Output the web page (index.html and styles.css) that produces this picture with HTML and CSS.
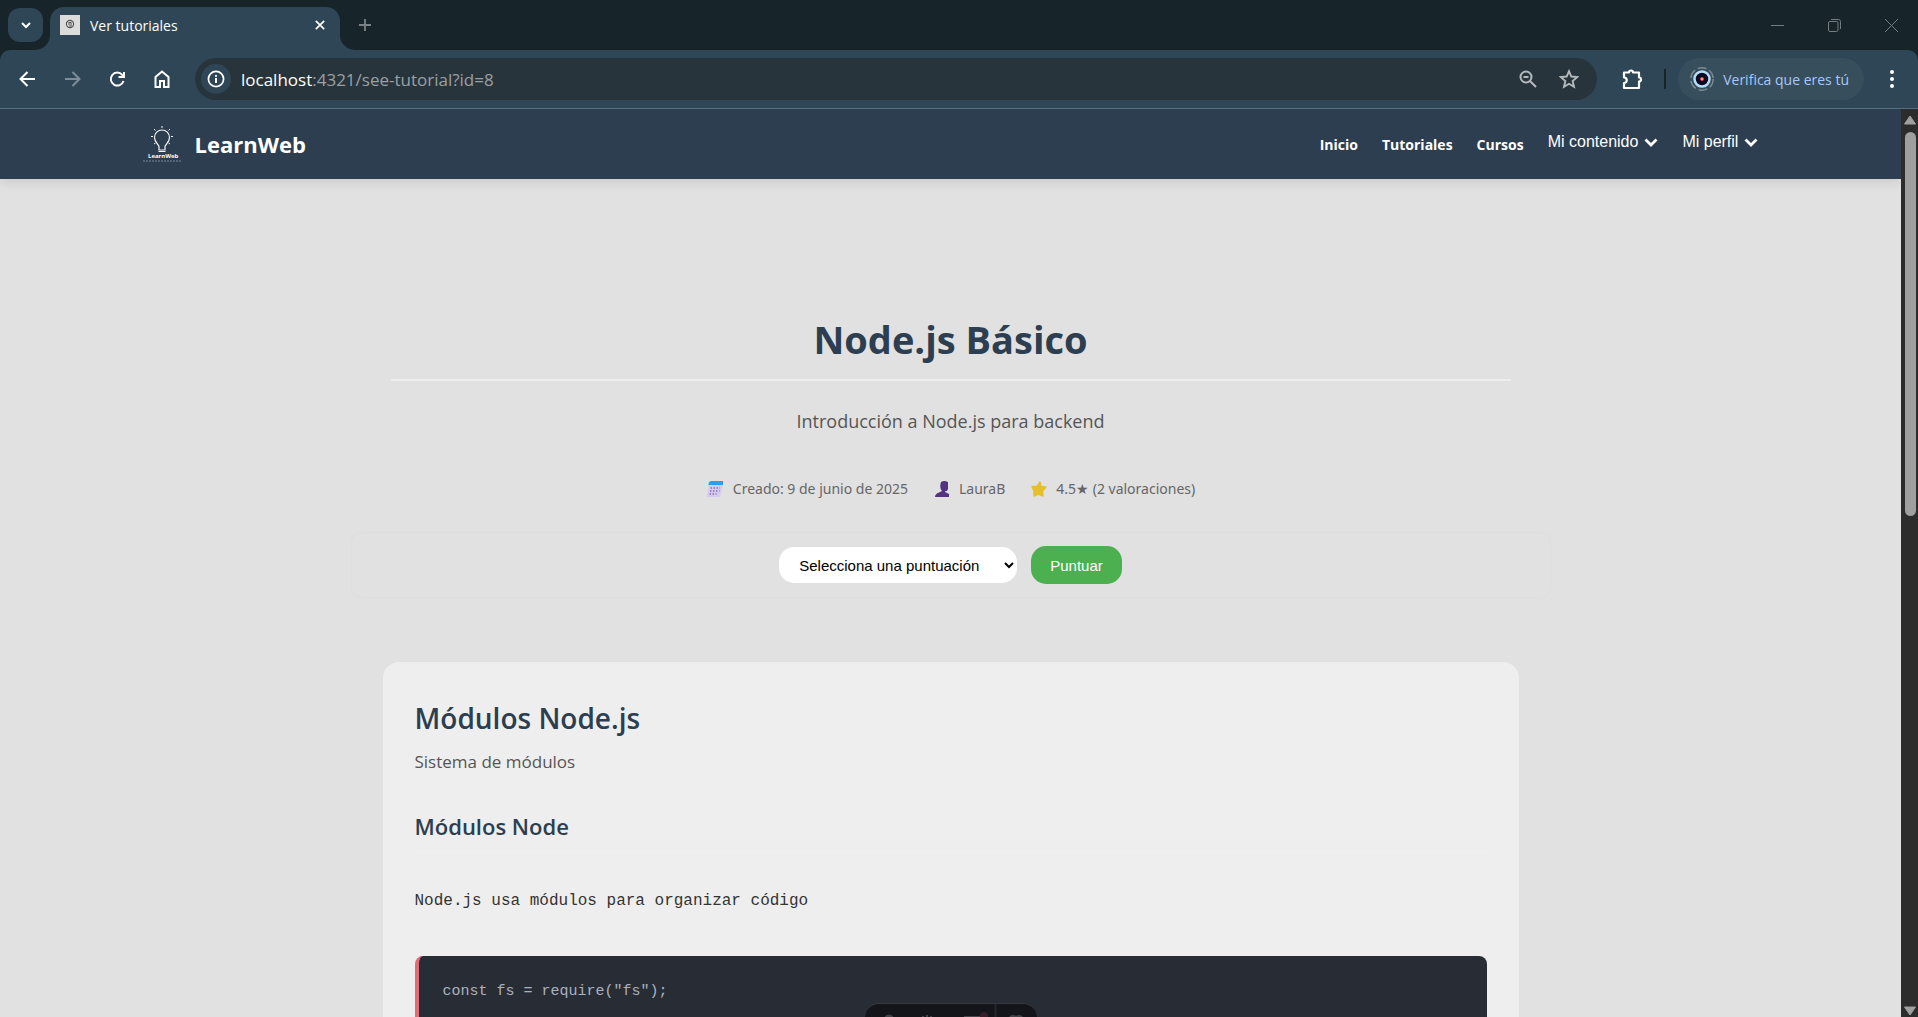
FILE: index.html
```html
<!DOCTYPE html>
<html lang="es">
<head>
<meta charset="utf-8">
<title>Ver tutoriales</title>
<link rel="stylesheet" href="styles.css">
</head>
<body>
<div class="window">
  <div class="tabstrip">
    <button class="tab-search" aria-label="Buscar pestañas"><svg width="12" height="12" viewBox="0 0 12 12"><path d="M2 4l4 4 4-4" class="line-white thick"/></svg></button>
    <div class="tab">
      <svg class="favicon" width="20" height="20" viewBox="0 0 20 20"><rect width="20" height="20" fill="#dcdcdc"/><circle cx="10" cy="9" r="3.6" fill="none" stroke="#555" stroke-width="1.2"/><path d="M8 9h4M8.500 7.500h3M9 11h3" stroke="#555"/></svg>
      <span class="tab-title">Ver tutoriales</span>
      <button class="plain" aria-label="Cerrar pestaña"><svg width="10" height="10" viewBox="0 0 10 10"><path d="M.8.800l8.400 8.400M9.200.800L.8 9.200" class="line-white" stroke-width="1.700"/></svg></button>
      <svg class="tab-foot foot-left" width="15" height="15" viewBox="0 0 15 15"><path d="M15 0v15H0A15 15 0 0 0 15 0z" fill="#2e4655"/></svg>
      <svg class="tab-foot foot-right" width="15" height="15" viewBox="0 0 15 15"><path d="M0 0v15h15A15 15 0 0 1 0 0z" fill="#2e4655"/></svg>
    </div>
    <button class="plain new-tab" aria-label="Nueva pestaña"><svg width="14" height="14" viewBox="0 0 14 14"><path d="M7 1v12M1 7h12" stroke="#7b8386" stroke-width="1.8"/></svg></button>
    <div class="window-buttons">
      <button class="plain" aria-label="Minimizar"><svg width="13" height="13" viewBox="0 0 13 13"><path d="M0 6.500h13" stroke="#747c80"/></svg></button>
      <button class="plain" aria-label="Restaurar"><svg width="13" height="13" viewBox="0 0 13 13" fill="none" stroke="#747c80"><rect x=".5" y="2.500" width="9.500" height="10" rx="1.500"/><path d="M3 .500H10.500q2 0 2 2V10"/></svg></button>
      <button class="plain" aria-label="Cerrar"><svg width="13" height="13" viewBox="0 0 13 13"><path d="M0 0l13 13M13 0L0 13" stroke="#747c80"/></svg></button>
    </div>
  </div>

  <div class="toolbar">
    <div class="nav-buttons">
      <button class="plain" aria-label="Atrás"><svg width="18" height="18" viewBox="0 0 18 18"><path d="M17 9H3M9.500 2L2.500 9l7 7" class="line-white thick"/></svg></button>
      <button class="plain" aria-label="Adelante"><svg width="18" height="18" viewBox="0 0 18 18"><path d="M2 9h14M9.500 2l7 7-7 7" fill="none" stroke="#7e8d97" stroke-width="2"/></svg></button>
      <button class="plain" aria-label="Recargar"><svg width="18" height="18" viewBox="0 0 18 18"><path d="M15.500 11A6.500 6.500 0 1 1 14.200 4.800L16 6.500M16 2v5h-5.500" class="line-white thick"/></svg></button>
      <button class="plain" aria-label="Inicio"><svg width="18" height="18" viewBox="0 0 18 18"><path d="M2.500 17V7l6.500-5.500L15.500 7v10h-4.500v-6H7v6z" class="line-white thick"/></svg></button>
    </div>
    <div class="address">
      <button class="site-info" aria-label="Información del sitio"><svg width="18" height="18" viewBox="0 0 18 18"><circle cx="9" cy="9" r="7.600" class="line-white" stroke-width="1.700"/><path d="M9 8v5M9 5v1.800" class="line-white thick"/></svg></button>
      <span class="url">localhost<span class="url-path">:4321/see-tutorial?id=8</span></span>
      <button class="plain" aria-label="Zoom"><svg width="18" height="18" viewBox="0 0 18 18" fill="none" stroke="#b4b9bc" stroke-width="2"><circle cx="7" cy="7" r="5.500"/><path d="M11 11l6 6M4.500 7h5"/></svg></button>
      <button class="plain star" aria-label="Añadir a favoritos"><svg width="20" height="20" viewBox="0 0 18 18"><path d="M9 2l2.100 4.800 5.200.5-4 3.500 1.200 5.200L9 13.300 4.500 16l1.200-5.200-4-3.500 5.200-.5z" fill="none" stroke="#b4b9bc" stroke-width="1.700"/></svg></button>
    </div>
    <button class="plain" aria-label="Extensiones"><svg width="22" height="22" viewBox="0 0 22 22"><path d="M3 4.500h5a2 2 0 0 1 4 0h6v5a2 2 0 0 1 0 4v6.500H3v-5a2.700 2.700 0 0 0 0-5.500z" class="line-white" stroke-width="2.200" stroke-linejoin="round"/></svg></button>
    <span class="divider"></span>
    <button class="profile"><svg width="24" height="26" viewBox="0 0 24 26"><circle cx="12" cy="13" r="11.200" fill="none" stroke="#7d8b93" stroke-width="1.500" stroke-dasharray="9 3"/><circle cx="12" cy="13" r="7.500" fill="#090a20" stroke="#b7ddf8" stroke-width="2.500"/><circle cx="12" cy="13" r="2" fill="#e2405f"/><circle cx="12" cy="13" r="1" fill="#ffd060"/></svg>Verifica que eres tú</button>
    <button class="plain menu" aria-label="Menú"><svg width="6" height="20" viewBox="0 0 6 20" fill="#fff"><circle cx="3" cy="3" r="2"/><circle cx="3" cy="10" r="2"/><circle cx="3" cy="17" r="2"/></svg></button>
  </div>

  <div class="viewport">
    <div class="page">
      <header class="site-header">
        <div class="header-inner">
          <a class="brand" href="#">
            <svg width="38" height="38" viewBox="0 0 38 38"><g fill="none" stroke="#f5f6f8"><path d="M16 25v-3.500c-1-2.500-4.500-4.500-4.500-9a7.500 7.500 0 0 1 15 0c0 4.500-3.500 6.500-4.500 9V25z" stroke-width="1.200"/><path d="M15.500 26.500h7"/><path d="M19 1v2M11 4l1.500 1.500M27 4l-1.500 1.500M8 11.500h2M28 11.500h2M11 19l1.500-1M27 19l-1.500-1"/></g><text x="5" y="33" class="logo-name">LearnWeb</text><path d="M0 36h38" stroke="#7f8b99" stroke-dasharray="2 1"/></svg>
            LearnWeb
          </a>
          <nav class="site-nav">
            <a href="#">Inicio</a>
            <a href="#">Tutoriales</a>
            <a href="#">Cursos</a>
            <button class="dropdown">Mi contenido <svg width="14" height="9" viewBox="0 0 14 9"><path d="M1.500 1.500L7 7l5.500-5.500" class="line-white" stroke-width="2.800"/></svg></button>
            <button class="dropdown">Mi perfil <svg width="14" height="9" viewBox="0 0 14 9"><path d="M1.500 1.500L7 7l5.500-5.500" class="line-white" stroke-width="2.800"/></svg></button>
          </nav>
        </div>
      </header>

      <main class="tutorial">
        <div class="intro">
          <h1>Node.js Básico</h1>
          <p class="lead">Introducción a Node.js para backend</p>
          <div class="meta">
            <span><svg width="18" height="16" viewBox="0 0 18 16"><path d="M3 4h14l-3 12H1z" fill="#d6cbee"/><path d="M3 1.500Q3.500 0 5 0h12v4H2.300z" fill="#2b9df4"/><path d="M4.500 7h9.500M4 10h9.500M3.500 13h7" stroke="#8573bd" stroke-width="1.500" stroke-dasharray="1.500 1.500"/></svg>Creado: 9 de junio de 2025</span>
            <span><svg width="16" height="16" viewBox="0 0 16 16"><path d="M7 1Q10-1 14 1v7q-1 3-3 2v1l4 2v3H1q0-3 4-4.500l3-1.500Q5 7 7 1z" fill="#533481"/></svg>LauraB</span>
            <span><svg width="16" height="16" viewBox="0 0 16 16"><path d="M9 1l1 4.500 5 .5-3.500 4 .5 5-4.500-2L3 15v-5L1 5.500h5z" fill="#e6bf2d" stroke="#e6bf2d" stroke-width="1.500" stroke-linejoin="round"/></svg>4.5★ (2 valoraciones)</span>
          </div>
        </div>
        <form class="rating">
          <select aria-label="Puntuación"><option>Selecciona una puntuación</option></select>
          <button type="button">Puntuar</button>
        </form>
        <section class="card">
          <h2>Módulos Node.js</h2>
          <p class="summary">Sistema de módulos</p>
          <h3>Módulos Node</h3>
          <p class="body-text">Node.js usa módulos para organizar código</p>
          <pre class="code"><code>const fs = require("fs");</code></pre>
        </section>
      </main>
    </div>
    <div class="scrollbar">
      <svg width="14" height="12" viewBox="0 0 14 12"><path d="M7 2l5.500 8h-11z" class="arrow"/></svg>
      <span class="thumb"></span>
      <svg width="14" height="12" viewBox="0 0 14 12"><path d="M7 10l5.500-8h-11z" class="arrow"/></svg>
    </div>
  </div>

  <div class="dev-toolbar">
    <svg width="172" height="14" viewBox="0 0 172 14" fill="none" stroke="#43454a"><path d="M20 14q0-3 4-3t4 3" fill="#43454a"/><path d="M58 13v-1M62 14v-3M66 12v2" stroke-width="2"/><path d="M99 13h17" stroke-width="2"/><path d="M145 14q0-2 3-2t3 2q0-2 3-2t3 2" stroke-width="2"/><circle cx="119" cy="12" r="4" fill="#3b1c29" stroke="none"/><path d="M130.500 0v14" stroke="#24272e" stroke-width="2"/></svg>
  </div>
</div>
</body>
</html>
```

FILE: styles.css
```css
* { box-sizing: border-box; }
body {
  margin: 0;
  font-family: "Open Sans", "Noto Sans", sans-serif;
  background: #17242a;
  color: #333;
}
h1, h2, h3, p, pre { margin: 0; }
button { font: inherit; color: inherit; border: 0; padding: 0; background: none; }
a { color: inherit; text-decoration: none; }
svg { display: block; flex: none; }
.line-white { fill: none; stroke: #fff; }
.thick { stroke-width: 2; }
.plain { display: flex; align-items: center; justify-content: center; }

.window { height: 100vh; display: flex; flex-direction: column; overflow: hidden; position: relative; }

/* Tab strip */
.tabstrip { flex: none; height: 50px; display: flex; padding-left: 8px; color: #fff; font-size: 14px; }
.tab-search { width: 35px; height: 34px; margin-top: 8px; border-radius: 12px; background: #2e4655; display: flex; align-items: center; justify-content: center; }
.tab { position: relative; width: 290px; margin: 7px 0 0 7px; padding: 0 15px 7px 10px; display: flex; align-items: center; gap: 10px; background: #2e4655; border-radius: 14px 14px 0 0; }
.tab-title { flex: 1; }
.tab-foot { position: absolute; bottom: 0; }
.foot-left { right: 100%; }
.foot-right { left: 100%; }
.new-tab { margin-left: 18px; }
.window-buttons { margin-left: auto; display: flex; gap: 44px; padding-right: 20px; }

/* Toolbar */
.toolbar { flex: none; height: 59px; display: flex; align-items: center; background: #2e4655; border-bottom: 1px solid #54707a; border-radius: 10px 10px 0 0; padding: 0 18px; }
.nav-buttons { display: flex; gap: 27px; }
.address { flex: 1; height: 42px; margin: 0 24px; padding: 0 18px 0 6px; border-radius: 21px; background: #28343b; display: flex; align-items: center; }
.site-info { width: 30px; height: 30px; border-radius: 15px; background: #2e4655; display: flex; align-items: center; justify-content: center; }
.url { flex: 1; margin-left: 10px; font-size: 17px; color: #fff; }
.url-path { color: #9aa0a4; }
.star { margin-left: 22px; }
.divider { width: 2px; height: 20px; margin: 0 12px 0 21px; background: #17242a; }
.profile { height: 42px; padding: 0 15px 0 12px; border-radius: 21px; background: #374e5d; display: flex; align-items: center; gap: 9px; color: #a8c7fa; font-size: 14px; white-space: nowrap; }
.menu { margin: 0 5px 0 25px; }

/* Page */
.viewport { flex: 1; min-height: 0; display: flex; }
.page { flex: 1; min-width: 0; overflow: hidden; background: #e1e1e1; }
.site-header { height: 70px; background: #2c3e50; box-shadow: 0 2px 12px rgba(0, 0, 0, .12); color: #fff; }
.header-inner { width: 85%; height: 100%; margin: 0 auto; display: flex; align-items: center; justify-content: space-between; }
.brand { display: flex; align-items: center; gap: 14px; font-size: 22px; font-weight: 700; }
.logo-name { font: 700 6px "Open Sans", sans-serif; fill: #fff; }
.site-nav { display: flex; align-items: center; gap: 24px; font-size: 14px; font-weight: 700; }
.dropdown { display: flex; align-items: center; gap: 6px; padding-bottom: 4px; font: 16px "Liberation Sans", Arial, sans-serif; }

.tutorial { width: 1200px; max-width: 100%; margin: 0 auto; padding-top: 130px; }
.intro { padding: 0 40px; text-align: center; }
h1 { font-size: 38px; line-height: 60px; color: #2c3e50; border-bottom: 2px solid #eee; padding-bottom: 10px; }
.lead { margin-top: 24px; font-size: 18px; line-height: 32px; color: #555; }
.meta { display: flex; justify-content: center; gap: 26px; margin-top: 40px; font-family: "Noto Sans", sans-serif; font-size: 14px; line-height: 24px; color: #666; }
.meta span { display: flex; align-items: center; gap: 9px; }
.rating { display: flex; align-items: center; justify-content: center; gap: 14px; height: 66px; margin-top: 31px; border: 1px solid #dedede; border-radius: 10px; font: 15px "Liberation Sans", Arial, sans-serif; }
.rating select { width: 238px; height: 36px; padding: 0 16px; border: 0; border-radius: 15px; background: #fff; color: #000; font: inherit; }
.rating button { height: 38px; padding: 0 19px; border-radius: 15px; background: #4caf50; color: #fff; }

.card { margin: 64px 32px 0; padding: 32px 32px 0; border-radius: 16px; background: #eee; }
h2 { font-size: 28px; line-height: 48px; font-weight: 600; color: #2c3e50; }
.summary { margin-top: 8px; font-size: 17px; line-height: 24px; color: #555; }
h3 { margin-top: 34px; padding-bottom: 8px; font-size: 22px; line-height: 36px; font-weight: 600; color: #2c3e50; border-bottom: 1px solid #f0f0f0; }
.body-text { margin-top: 34px; font: 16px/28px "Liberation Mono", monospace; color: #333; }
.code { margin-top: 41px; height: 160px; padding: 24px; border-left: 4px solid #e06c75; border-radius: 8px; background: #282c34; color: #abb2bf; font: 15px/24px "Liberation Mono", monospace; }
.code code { font: inherit; }

.scrollbar { width: 17px; flex: none; padding: 5px 1px 0 2px; background: #2c2c2c; display: flex; flex-direction: column; align-items: center; }
.arrow { fill: #9f9f9f; stroke: #9f9f9f; stroke-linejoin: round; }
.thumb { flex: none; width: 11px; height: 384px; margin: 6px 0 auto; border-radius: 6px; background: #9f9f9f; }

.dev-toolbar { position: absolute; bottom: 0; left: 50%; width: 172px; height: 14px; margin-left: -94px; overflow: hidden; background: #13151a; border-top: 1px solid #343841; border-radius: 20px 20px 0 0; }
```
